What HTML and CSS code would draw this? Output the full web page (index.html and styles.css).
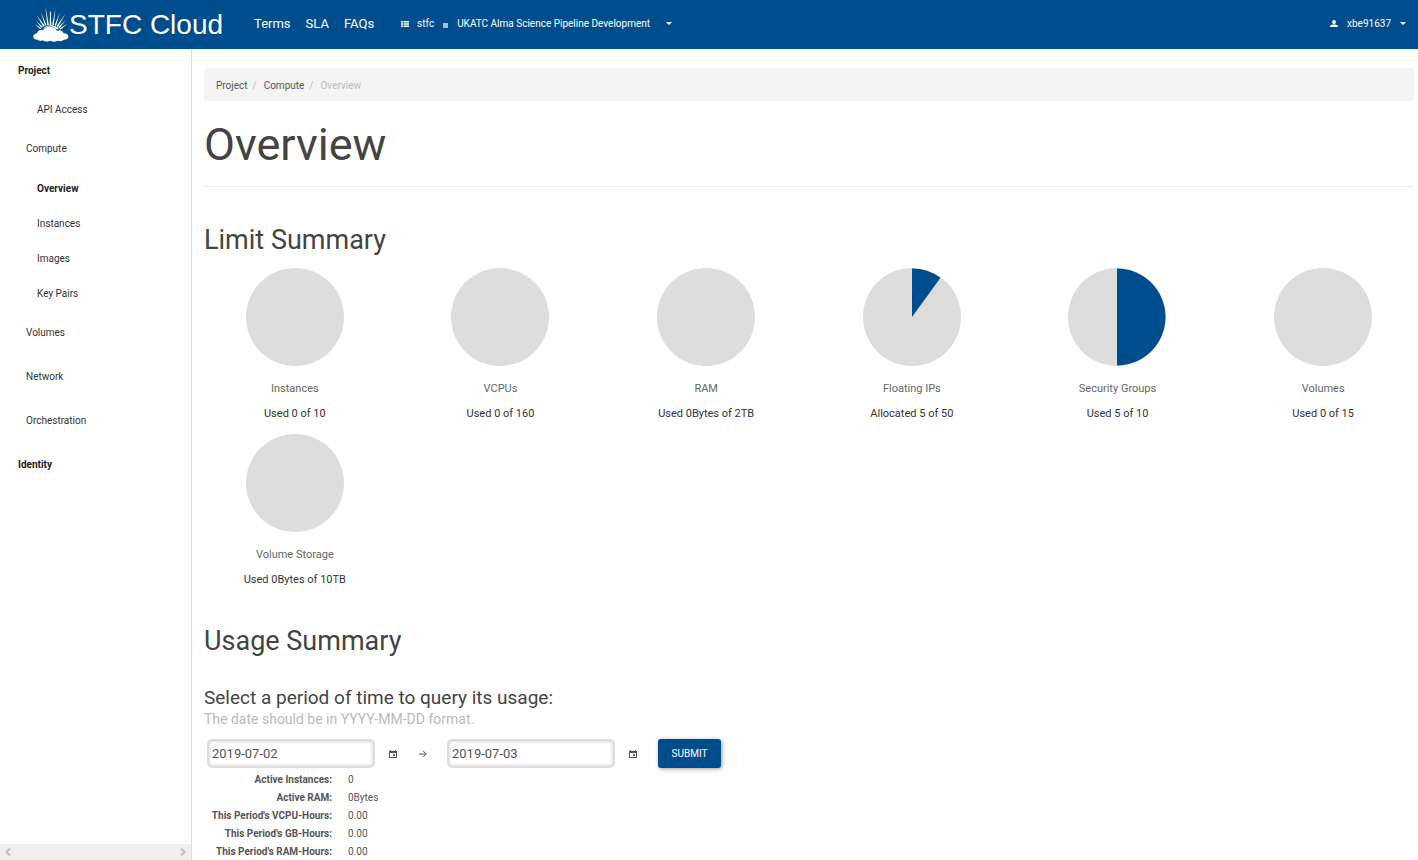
FILE: index.html
```
<!DOCTYPE html>
<html lang="en">
<head>
<meta charset="utf-8">
<title>Overview - STFC Cloud</title>
<link rel="stylesheet" href="styles.css">
</head>
<body>
<header class="topbar">
  <a class="brand" href="#">
    <svg class="brand-mark" width="36" height="36" viewBox="0 0 36 36" aria-hidden="true">
      <g fill="#fff">
        <path d="M16.800 19 16.900 5.500 17.800 5.500 18.300 19z"/>
        <path d="M14.300 19 12.300 0.500 15.900 19z"/>
        <path d="M19.200 19 22.300 3 20.800 19z"/>
        <path d="M12 19.500 8 6.500 13.600 19.200z"/>
        <path d="M21.600 19.200 27 6.500 23 19.800z"/>
        <path d="M10.200 20.500 3.500 9 11.800 19.800z"/>
        <path d="M23.600 20 32 8.500 25 21z"/>
        <path d="M8.500 21.800 3 15 9.800 20.800z"/>
        <path d="M25.300 21 32.500 14.500 26.300 22.200z"/>
        <path d="M7.500 23.300 2 18.500 8.300 22z"/>
        <path d="M26.500 22.300 34.500 18 27.300 23.700z"/>
        <path d="M10 22.800C12 20.300 15 19.300 18 19.300s6.500 1.500 8 4z"/>
      </g>
      <path d="M4.500 33.800C-1.200 33.500-1 28 4 27.300c.5-2.800 3.500-4 6-3 3-4.800 12-4.800 14 .7 2.500-1.500 6-.3 6.500 2.300 6.500-.3 6.500 6.300.5 6.500-1.500 1.500-4.500 1.700-6.500.9-2 1.300-5 1.300-7 0-2.500 1.300-6.500.9-7.500-.5-1.800.8-4 .7-5.500-.4z" fill="#fff" stroke="#004d8d" stroke-width=".9" paint-order="stroke"/>
    </svg>
    <span class="brand-name">STFC Cloud</span>
  </a>
  <nav class="site-links" aria-label="Site">
    <a href="#">Terms</a>
    <a href="#">SLA</a>
    <a href="#">FAQs</a>
  </nav>
  <button class="context" type="button">
    <svg class="context-icon" width="8" height="6" viewBox="0 0 8 6" aria-hidden="true"><path d="M0 0h2v1.600H0zM2.500 0H8v1.600H2.500zM0 2.200h2v1.600H0zM2.500 2.200H8v1.600H2.500zM0 4.400h2V6H0zM2.500 4.400H8V6H2.500z" fill="#fff"/></svg>
    <span>stfc</span>
    <span class="context-dot"></span>
    <span>UKATC Alma Science Pipeline Development</span>
    <span class="caret"></span>
  </button>
  <button class="user" type="button">
    <svg width="8" height="8" viewBox="0 0 8 8" aria-hidden="true"><circle cx="4" cy="2" r="1.900" fill="#fff"/><path d="M0 7V6.200C0 5 2 4.500 4 4.500s4 .5 4 1.700V7z" fill="#fff"/></svg>
    <span class="user-name">xbe91637</span>
    <span class="caret"></span>
  </button>
</header>
<div class="shell">
  <aside class="sidebar">
    <nav class="menu" aria-label="Dashboards">
      <a class="menu-top" href="#">Project</a>
      <a class="menu-item" href="#">API Access</a>
      <a class="menu-group" href="#">Compute</a>
      <div class="menu-panel">
        <a class="menu-item active" href="#" aria-current="page">Overview</a>
        <a class="menu-item" href="#">Instances</a>
        <a class="menu-item" href="#">Images</a>
        <a class="menu-item" href="#">Key Pairs</a>
      </div>
      <div class="menu-groups">
        <a class="menu-group" href="#">Volumes</a>
        <a class="menu-group" href="#">Network</a>
        <a class="menu-group" href="#">Orchestration</a>
        <a class="menu-top" href="#">Identity</a>
      </div>
    </nav>
    <div class="scrollbar" aria-hidden="true">
      <svg width="6" height="8" viewBox="0 0 6 8"><path d="M5 .5 1.500 4 5 7.500" fill="none" stroke="#bfbfbf" stroke-width="2"/></svg>
      <svg width="6" height="8" viewBox="0 0 6 8"><path d="M1 .5 4.500 4 1 7.500" fill="none" stroke="#bfbfbf" stroke-width="2"/></svg>
    </div>
  </aside>
  <main class="content">
    <ol class="breadcrumb">
      <li><a href="#">Project</a></li>
      <li><a href="#">Compute</a></li>
      <li class="current">Overview</li>
    </ol>
    <h1>Overview</h1>
    <section>
      <h2>Limit Summary</h2>
      <div class="quotas">
        <div class="quota"><svg class="pie" viewBox="0 0 100 100"><circle cx="50" cy="50" r="49"/></svg><div class="quota-title">Instances</div><div class="quota-use">Used 0 of 10</div></div>
        <div class="quota"><svg class="pie" viewBox="0 0 100 100"><circle cx="50" cy="50" r="49"/></svg><div class="quota-title">VCPUs</div><div class="quota-use">Used 0 of 160</div></div>
        <div class="quota"><svg class="pie" viewBox="0 0 100 100"><circle cx="50" cy="50" r="49"/></svg><div class="quota-title">RAM</div><div class="quota-use">Used 0Bytes of 2TB</div></div>
        <div class="quota"><svg class="pie" viewBox="0 0 100 100"><circle cx="50" cy="50" r="49"/><path d="M50 50V1.500A48.500 48.500 0 0 1 78.500 10.760z"/></svg><div class="quota-title">Floating IPs</div><div class="quota-use">Allocated 5 of 50</div></div>
        <div class="quota"><svg class="pie" viewBox="0 0 100 100"><circle cx="50" cy="50" r="49"/><path d="M50 1.500A48.500 48.500 0 0 1 50 98.500z"/></svg><div class="quota-title">Security Groups</div><div class="quota-use">Used 5 of 10</div></div>
        <div class="quota"><svg class="pie" viewBox="0 0 100 100"><circle cx="50" cy="50" r="49"/></svg><div class="quota-title">Volumes</div><div class="quota-use">Used 0 of 15</div></div>
        <div class="quota"><svg class="pie" viewBox="0 0 100 100"><circle cx="50" cy="50" r="49"/></svg><div class="quota-title">Volume Storage</div><div class="quota-use">Used 0Bytes of 10TB</div></div>
      </div>
    </section>
    <section class="usage">
      <h2>Usage Summary</h2>
      <form>
        <h3>Select a period of time to query its usage:</h3>
        <p class="help">The date should be in YYYY-MM-DD format.</p>
        <div class="period">
          <input class="date" type="text" value="2019-07-02" aria-label="From">
          <svg class="calendar" width="8" height="8" viewBox="0 0 8 8" aria-hidden="true"><path d="M0 1h1V0h1v1h4V0h1v1h1v7H0zM1 3v4h6V3zM4 4.300h2v2H4z" fill="#555" fill-rule="evenodd"/></svg>
          <svg class="arrow" width="8" height="8" viewBox="0 0 8 8" aria-hidden="true"><path d="M0 4h7M4 .8 7.200 4 4 7.200" fill="none" stroke="#555"/></svg>
          <input class="date" type="text" value="2019-07-03" aria-label="To">
          <svg class="calendar" width="8" height="8" viewBox="0 0 8 8" aria-hidden="true"><path d="M0 1h1V0h1v1h4V0h1v1h1v7H0zM1 3v4h6V3zM4 4.300h2v2H4z" fill="#555" fill-rule="evenodd"/></svg>
          <button class="submit" type="submit">SUBMIT</button>
        </div>
      </form>
      <dl class="totals">
        <dt>Active Instances:</dt><dd>0</dd>
        <dt>Active RAM:</dt><dd>0Bytes</dd>
        <dt>This Period's VCPU-Hours:</dt><dd>0.00</dd>
        <dt>This Period's GB-Hours:</dt><dd>0.00</dd>
        <dt>This Period's RAM-Hours:</dt><dd>0.00</dd>
      </dl>
    </section>
  </main>
</div>
</body>
</html>
```
FILE: styles.css
```
* { box-sizing: border-box; }
body {
  margin: 0;
  height: 100vh;
  display: flex;
  flex-direction: column;
  overflow: hidden;
  background: #fff;
  color: #444;
  font: 10px/18px Roboto, "Liberation Sans", sans-serif;
}
a { color: inherit; text-decoration: none; }
button, input { font-family: inherit; }

.topbar {
  flex: none;
  display: flex;
  align-items: center;
  height: 49px;
  padding: 0 12px 2px 33px;
  background: #004d8d;
  color: #fff;
}
.brand { display: flex; align-items: center; }
.brand-name { padding-top: 2px; font: 28px/36px "Liberation Sans", Arial, sans-serif; }
.site-links { display: flex; gap: 15px; margin-left: 31px; font-size: 13px; }
.context, .user {
  display: flex;
  align-items: center;
  padding: 0;
  border: 0;
  background: none;
  color: inherit;
  font-size: 10px;
  line-height: 18px;
}
.context { margin-left: 27px; gap: 8px; }
.context-dot { width: 5px; height: 5px; margin: 4px 1px 0; background: #b8b8b8; }
.caret { border: 3px solid transparent; border-top-color: #fff; border-bottom: 0; }
.context .caret { margin-left: 8px; }
.user { margin-left: auto; gap: 9px; }

.shell { flex: 1; display: flex; min-height: 0; }
.sidebar {
  flex: none;
  display: flex;
  flex-direction: column;
  width: 192px;
  border-right: 1px solid #ddd;
}
.menu { flex: 1; color: #333; }
.menu a { display: flex; align-items: center; }
.menu .menu-top { height: 43px; padding-left: 18px; color: #222; font-weight: 700; }
.menu .menu-item { height: 35px; padding-left: 37px; }
.menu .menu-group { height: 43px; padding-left: 26px; }
.menu .active { color: #222; font-weight: 700; }
.menu-panel { padding-top: 1px; }
.menu-groups { display: flex; flex-direction: column; gap: 1px; }
.scrollbar {
  display: flex;
  justify-content: space-between;
  align-items: center;
  height: 16px;
  padding: 0 5px;
  background: #efefef;
}

.content { flex: 1; min-width: 0; padding: 19px 4px 0 12px; overflow: hidden; }
.breadcrumb {
  display: flex;
  height: 33px;
  margin: 0;
  padding: 9px 12px 6px;
  border-radius: 3px;
  background: #f4f4f4;
  color: #555;
  list-style: none;
}
.breadcrumb li + li::before { content: "/"; padding: 0 7px 0 5px; color: #bbb; }
.breadcrumb .current { color: #bbb; }
h1, h2, h3, p { margin: 0; font-weight: 400; }
h1 {
  height: 86px;
  padding-top: 19px;
  border-bottom: 1px solid #eee;
  font-size: 45px;
  line-height: 50px;
}
h2 { padding-top: 38px; font-size: 27px; line-height: 30px; }
.quotas {
  display: grid;
  grid-template-columns: repeat(6, 1fr);
  row-gap: 7px;
  margin: 12px -12px 0;
  text-align: center;
  font-size: 11px;
  line-height: 25px;
}
.pie { display: block; width: 100px; height: 100px; margin: 0 auto 9px; }
.pie circle { fill: #ddd; }
.pie path { fill: #004d8d; }
.quota-title { color: #666; }
.quota-use { color: #333; }
.usage h2 { padding-top: 34px; }
h3 { margin-top: 31px; font-size: 19px; line-height: 22px; }
.help { color: #bbb; font-size: 14px; line-height: 20px; }
.period { display: flex; align-items: center; margin: 10px 0 0 3px; }
.date {
  width: 168px;
  height: 29px;
  padding: 0 3px;
  border: 2px solid #ddd;
  border-radius: 5px;
  box-shadow: inset 0 0 3px 1px #ddd;
  background: #fff;
  color: #555;
  font-size: 13px;
}
.calendar { margin-left: 14px; }
.arrow { margin: 0 20px 0 22px; }
.submit {
  width: 63px;
  height: 29px;
  margin-left: 21px;
  padding: 0;
  border: 0;
  border-radius: 3px;
  background: #004d8d;
  box-shadow: 1px 1px 4px rgba(0, 0, 0, .4);
  color: #fff;
  font-size: 10px;
}
.totals {
  display: grid;
  grid-template-columns: 128px 1fr;
  column-gap: 16px;
  margin: 3px 0 0;
  color: #555;
}
.totals dt { text-align: right; font-weight: 700; }
.totals dd { margin: 0; }
```
